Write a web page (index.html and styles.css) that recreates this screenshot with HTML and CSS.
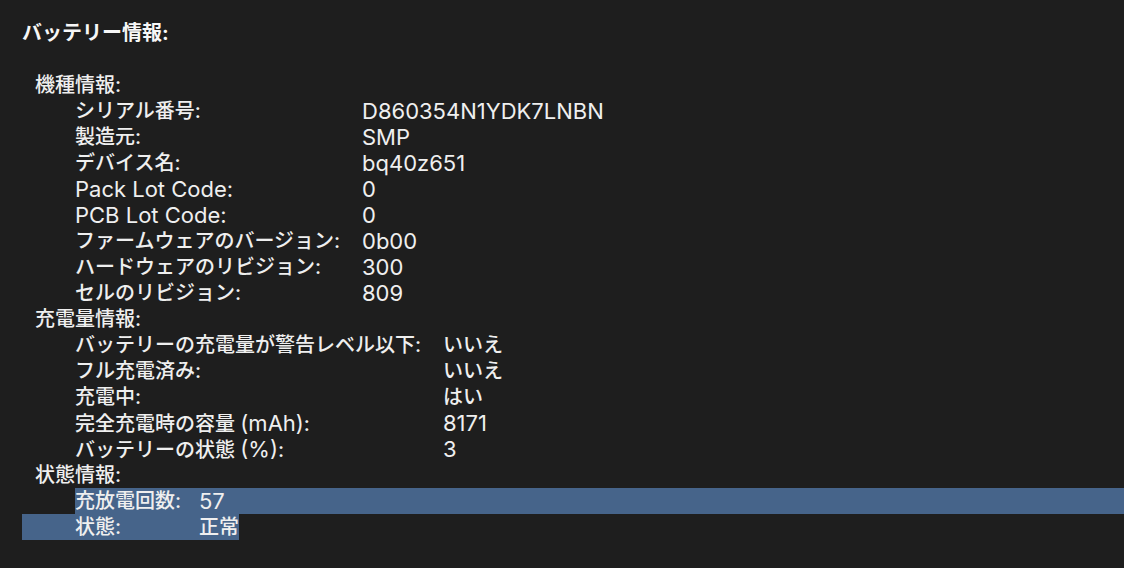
FILE: index.html
```html
<!DOCTYPE html>
<html lang="ja">

<head>
	<meta charset="UTF-8">
	<meta name="viewport" content="width=device-width, initial-scale=1.0">
	<title>バッテリー情報</title>
	<link rel="stylesheet" href="styles.css">
</head>

<body>
	<div class="report">
		<div class="report__title">バッテリー情報:</div>
		<div class="report__blank"></div>

		<div class="report__group report__group--model">
			<div class="report__head">機種情報:</div>
			<div class="report__row"><span class="report__label">シリアル番号:</span><span class="en">D860354N1YDK7LNBN</span></div>
			<div class="report__row"><span class="report__label">製造元:</span><span class="en">SMP</span></div>
			<div class="report__row"><span class="report__label">デバイス名:</span><span class="en">bq40z651</span></div>
			<div class="report__row"><span class="report__label en">Pack Lot Code:</span><span class="en">0</span></div>
			<div class="report__row"><span class="report__label en">PCB Lot Code:</span><span class="en">0</span></div>
			<div class="report__row"><span class="report__label">ファームウェアのバージョン:</span><span class="en">0b00</span></div>
			<div class="report__row"><span class="report__label">ハードウェアのリビジョン:</span><span class="en">300</span></div>
			<div class="report__row"><span class="report__label">セルのリビジョン:</span><span class="en">809</span></div>
		</div>

		<div class="report__group report__group--charge">
			<div class="report__head">充電量情報:</div>
			<div class="report__row"><span class="report__label">バッテリーの充電量が警告レベル以下:</span><span>いいえ</span></div>
			<div class="report__row"><span class="report__label">フル充電済み:</span><span>いいえ</span></div>
			<div class="report__row"><span class="report__label">充電中:</span><span>はい</span></div>
			<div class="report__row"><span class="report__label">完全充電時の容量 <span class="en">(mAh)</span>:</span><span class="en">8171</span></div>
			<div class="report__row"><span class="report__label">バッテリーの状態 <span class="en">(%)</span>:</span><span class="en">3</span></div>
		</div>

		<div class="report__group report__group--health">
			<div class="report__head">状態情報:</div>
			<div class="report__row report__row--selStart"><span class="report__label">充放電回数:</span><span class="en">57</span></div>
			<div class="report__row report__row--selEnd"><span class="report__label">状態:</span><span>正常</span></div>
		</div>
	</div>
</body>

</html>
```

FILE: styles.css
```css
body {
	margin: 0;
	background: #1e1e1e;
	color: #efefef;
	font-family: "Inter", "Noto Sans CJK JP", sans-serif;
	font-size: 20px;
	font-weight: 500;
	line-height: 26px;
}

/* latin runs are set a little larger than the kana/kanji */
.en {
	font-size: 22px;
	font-weight: 400;
}

.report {
	padding: 20px 0 0 22px;
}

.report__title {
	font-weight: bold;
	color: #f7f7f7;
}

.report__blank {
	height: 26px;
}

.report__head {
	padding-left: 13px;
	height: 26px;
}

.report__row {
	display: flex;
	height: 26px;
	margin-left: 53px;
	white-space: nowrap;
}

.report__label {
	flex: none;
}

.report__group--model .report__label {
	width: 287px;
}

.report__group--charge .report__label {
	width: 368px;
}

.report__group--health .report__label {
	width: 124px;
}

/* selection highlight */
.report__row--selStart {
	background: #46648a;
}

.report__row--selEnd {
	width: fit-content;
	margin-left: 0;
	padding-left: 53px;
	background: #46648a;
}
```
